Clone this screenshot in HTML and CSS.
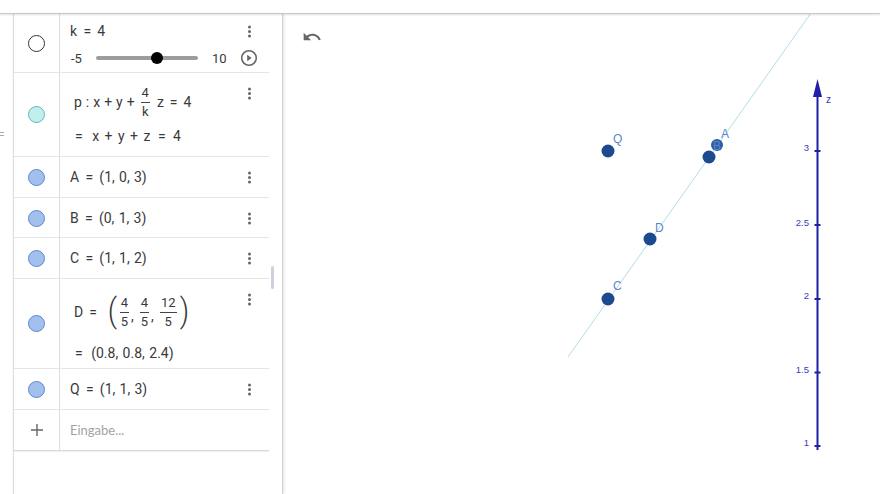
FILE: index.html
```html
<!DOCTYPE html>
<html lang="de">
<head>
<meta charset="utf-8">
<title>GeoGebra</title>
<link rel="stylesheet" href="styles.css">
</head>
<body>
<div class="topbar"></div>
<div class="main">
  <div class="gutter"><span class="toggle"></span></div>
  <div class="algebra">
    <div class="rows">
      <div class="row row-slider">
        <div class="mcol"><span class="marble hollow"></span></div>
        <div class="content top">
          <div class="line">k <span class="eq">=</span> 4</div>
          <div class="slider-line">
            <span class="min">-5</span>
            <div class="track"><span class="knob"></span></div>
            <span class="max">10</span>
          </div>
        </div>
        <div class="menu">
          <div class="dotsbox short"><span class="dots"></span></div>
          <svg class="play" width="18" height="18" viewBox="0 0 18 18"><circle cx="9" cy="9" r="7.3" fill="none" stroke="#666" stroke-width="1.6"/><path d="M7.2 5.8 L11.6 9 L7.2 12.2 Z" fill="#666"/></svg>
        </div>
      </div>

      <div class="row row-plane">
        <div class="mcol"><span class="marble cyan"></span></div>
        <div class="content top math">
          <div class="fline">p <span class="colon">:</span> x <span class="op">+</span> y <span class="op">+</span><span class="frac"><span class="num">4</span><span class="den">k</span></span>z <span class="eq">=</span> 4</div>
          <div class="line second wide"><span class="eq first">=</span> x <span class="op">+</span> y <span class="op">+</span> z <span class="eq">=</span> 4</div>
        </div>
        <div class="menu"><div class="dotsbox"><span class="dots"></span></div></div>
      </div>

      <div class="row row-41">
        <div class="mcol"><span class="marble blue"></span></div>
        <div class="content"><div class="line">A <span class="eq">=</span> (1, 0, 3)</div></div>
        <div class="menu"><div class="dotsbox"><span class="dots"></span></div></div>
      </div>

      <div class="row row-40">
        <div class="mcol"><span class="marble blue"></span></div>
        <div class="content"><div class="line">B <span class="eq">=</span> (0, 1, 3)</div></div>
        <div class="menu"><div class="dotsbox"><span class="dots"></span></div></div>
      </div>

      <div class="row row-41">
        <div class="mcol"><span class="marble blue"></span></div>
        <div class="content"><div class="line">C <span class="eq">=</span> (1, 1, 2)</div></div>
        <div class="menu"><div class="dotsbox"><span class="dots"></span></div></div>
      </div>

      <div class="row row-point">
        <div class="mcol"><span class="marble blue"></span></div>
        <div class="content top math">
          <div class="fline">D <span class="eq">=</span> <span class="bigp">(</span><span class="frac"><span class="num">4</span><span class="den">5</span></span><span class="comma">,</span><span class="frac"><span class="num">4</span><span class="den">5</span></span><span class="comma">,</span><span class="frac"><span class="num">12</span><span class="den">5</span></span><span class="bigp close">)</span></div>
          <div class="line second"><span class="eq first">=</span> (0.8, 0.8, 2.4)</div>
        </div>
        <div class="menu"><div class="dotsbox"><span class="dots"></span></div></div>
      </div>

      <div class="row row-41">
        <div class="mcol"><span class="marble blue"></span></div>
        <div class="content"><div class="line">Q <span class="eq">=</span> (1, 1, 3)</div></div>
        <div class="menu"><div class="dotsbox"><span class="dots"></span></div></div>
      </div>

      <div class="row row-41 row-input">
        <div class="mcol"><svg width="14" height="14" viewBox="0 0 14 14"><path d="M7 1 V13 M1 7 H13" stroke="#666" stroke-width="1.4"/></svg></div>
        <div class="content"><div class="placeholder">Eingabe...</div></div>
        <div class="menu"></div>
      </div>
    </div>
    <div class="scroll"><span class="thumb"></span></div>
  </div>

  <div class="graphics">
    <svg class="undo" width="20" height="20" viewBox="0 0 24 24"><path d="M12.5 8c-2.65 0-5.05.99-6.9 2.6L2 7v9h9l-3.62-3.62c1.39-1.16 3.16-1.88 5.12-1.88 3.54 0 6.55 2.31 7.6 5.5l2.37-.78C21.08 11.03 17.15 8 12.5 8z" fill="#666"/></svg>
    <svg class="canvas" width="597" height="480" viewBox="283 14 597 480">
      <line x1="568" y1="357" x2="811" y2="13" stroke="#b4dcea" stroke-width="1"/>
      <circle cx="608" cy="151" r="6.5" fill="#1b4b8e"/>
      <text class="lbl" x="613" y="143">Q</text>
      <circle cx="717" cy="145" r="6" fill="#2a5ea6"/>
      <text class="lbl" x="721" y="138">A</text>
      <text class="lbl" x="713" y="150">B</text>
      <circle cx="709" cy="157" r="6.5" fill="#1b4b8e"/>
      <circle cx="650" cy="239" r="6.5" fill="#1b4b8e"/>
      <text class="lbl" x="655" y="232">D</text>
      <circle cx="608" cy="299" r="6.5" fill="#1b4b8e"/>
      <text class="lbl" x="613" y="290">C</text>

      <g class="axis">
        <line x1="817.5" y1="95" x2="817.5" y2="450" stroke="#1f1fa8" stroke-width="2"/>
        <path d="M817.5 79 L813 97 L822 97 Z" fill="#1f1fa8"/>
        <path d="M814.5 151 H820.5 M814.5 225 H820.5 M814.5 299 H820.5 M814.5 372.5 H820.5 M814.5 446 H820.5" stroke="#1f1fa8" stroke-width="2"/>
        <text class="zl" x="826" y="103">z</text>
        <text class="tick" x="809" y="151">3</text>
        <text class="tick" x="809" y="226">2.5</text>
        <text class="tick" x="809" y="299">2</text>
        <text class="tick" x="809" y="373">1.5</text>
        <text class="tick" x="809" y="446">1</text>
      </g>
    </svg>
  </div>
</div>
</body>
</html>
```

FILE: styles.css
```css
* { box-sizing: border-box; }
html, body { margin: 0; padding: 0; }
body {
  width: 880px;
  height: 494px;
  overflow: hidden;
  background: #fff;
  font-family: Roboto, "Liberation Sans", sans-serif;
  color: #3a3a3a;
}
.topbar {
  height: 14px;
  border-bottom: 1px solid #c9c9c9;
  box-shadow: 0 1px 2px rgba(0,0,0,.12);
  position: relative;
  z-index: 2;
}
.main { display: flex; height: 480px; }
.gutter { width: 13px; position: relative; flex: none; }
.toggle {
  position: absolute; left: 0; top: 118px;
  width: 4px; height: 4px;
  border-top: 1px solid #aaa; border-bottom: 1px solid #aaa;
}
.algebra {
  width: 270px; flex: none;
  display: flex;
  border-left: 1px solid #dcdcdc;
  border-right: 1px solid #d2d2d2;
  box-shadow: 1px 0 3px rgba(0,0,0,.12);
  position: relative;
  z-index: 1;
}
.rows { width: 255px; flex: none; }
.scroll { flex: 1; position: relative; }
.thumb {
  position: absolute; left: 2px; top: 252px;
  width: 3px; height: 23px; border-radius: 2px;
  background: #cfd0de;
}
.row {
  display: grid;
  grid-template-columns: 46px 1fr 40px;
  border-bottom: 1px solid #e6e6e6;
}
.row-slider { height: 59px; }
.row-plane { height: 84px; }
.row-41 { height: 41px; }
.row-40 { height: 40px; }
.row-point { height: 90px; }
.row-input { border-bottom-color: #dadada; box-shadow: 0 1px 1px rgba(0,0,0,.06); }

.mcol {
  display: flex; align-items: center; justify-content: center;
  border-right: 1px solid #dedede;
}
.marble { width: 17px; height: 17px; border-radius: 50%; display: block; }
.marble.hollow { background: #fff; border: 1.5px solid #333; }
.marble.cyan { background: #c2efec; border: 1px solid #62b9b6; }
.marble.blue { background: #a2c0ee; border: 1px solid #5d88cf; }

.content {
  padding-left: 10px;
  display: flex; flex-direction: column; justify-content: center;
  font-size: 14px;
}
.content.top { justify-content: flex-start; }
.line { line-height: 16px; white-space: nowrap; word-spacing: 0.8px; }
.eq { margin: 0 2px; }
.eq.first { margin: 0 4px 0 0; }
.wide { word-spacing: 2px; }

.row-slider .content { padding-top: 9px; }
.slider-line {
  display: flex; align-items: center;
  margin-top: 11px; height: 16px;
  font-size: 13px; padding-left: 1px;
}
.track {
  width: 102px; height: 4px; margin: 0 14px;
  background: #9c9c9c; border-radius: 2px; position: relative;
}
.knob {
  position: absolute; left: 55px; top: -4px;
  width: 12px; height: 12px; border-radius: 50%; background: #000;
}
.menu { display: flex; flex-direction: column; align-items: center; }
.dotsbox { height: 40px; width: 100%; display: flex; align-items: center; justify-content: center; }
.dotsbox.short { height: 34px; }
.dots {
  width: 3px; height: 3px; border-radius: 50%; background: #666;
  box-shadow: 0 -4.5px 0 #666, 0 4.5px 0 #666;
}
.play { display: block; margin-top: 1px; }

.math { padding-left: 14px; }
.row-plane .content { padding-top: 12px; }
.fline { display: flex; align-items: center; white-space: pre; height: 34px; word-spacing: 0.5px; }
.frac {
  display: inline-flex; flex-direction: column; align-items: center;
  margin: 0 7px 0 6px; font-size: 13px;
}
.num { line-height: 14px; padding: 0 1px 2px; border-bottom: 1px solid #444; }
.den { line-height: 14px; padding-top: 2px; }
.second { margin-top: 9px; padding-left: 1px; }

.row-point .content { padding-top: 14px; }
.row-point .fline { height: 38px; }
.bigp { font-size: 34px; font-weight: 300; line-height: 38px; margin: 0 0 4px 8px; transform: scaleX(0.85); }
.bigp.close { margin-left: 0; }
.bigp + .frac { margin-left: 2px; }
.row-point .frac { margin: 0 2px; }
.comma { align-self: center; margin-top: 8px; margin-right: 4px; }
.row-point .second { margin-top: 14px; word-spacing: 1px; }

.placeholder { font-size: 13px; color: #a3a3a3; font-family: Lato, Roboto, sans-serif; }

.graphics { flex: 1; position: relative; }
.canvas { display: block; }
.undo { position: absolute; left: 19px; top: 13px; }
.lbl { font-family: "Liberation Sans", Arial, sans-serif; font-size: 12px; fill: #5b86c8; }
.zl { font-family: "Liberation Sans", Arial, sans-serif; font-size: 10px; fill: #3535b8; }
.tick { font-family: "Liberation Sans", Arial, sans-serif; font-size: 9.5px; fill: #3a3ac0; text-anchor: end; }
```
